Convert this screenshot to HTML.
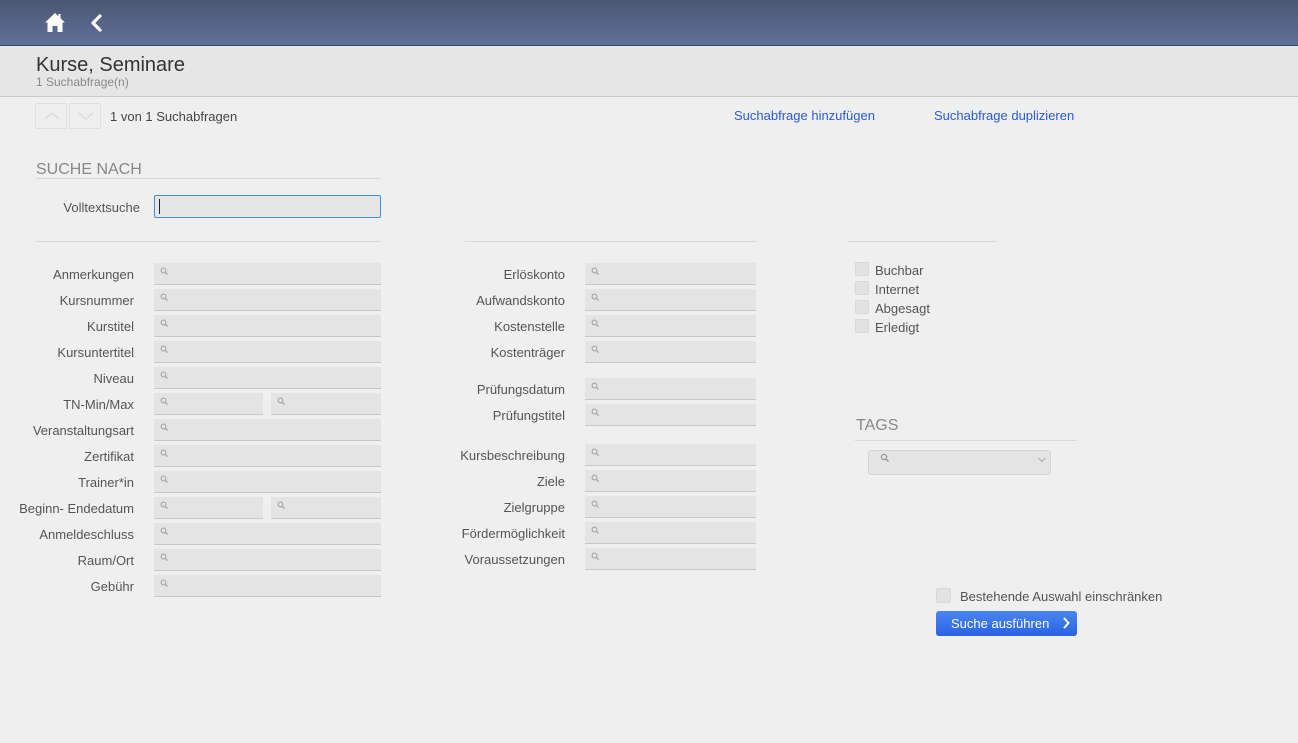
<!DOCTYPE html>
<html><head><meta charset="utf-8"><style>
*{box-sizing:border-box;margin:0;padding:0}
body{width:1298px;height:743px;background:#efefef;font-family:"Liberation Sans",Arial,sans-serif;position:relative;overflow:hidden;color:#444}
.a{position:absolute}
.top{left:0;top:0;width:1298px;height:46px;background:linear-gradient(#4b5672,#607199);border-bottom:1px solid #3c4660}
.band{left:0;top:46px;width:1298px;height:51px;background:#e6e6e6;border-bottom:1px solid #c9c9c9}
.lbl{font-size:13px;color:#555;text-align:right;line-height:16px;white-space:nowrap}
.in{height:22px;background:#e4e4e4;border-bottom:1px solid #c8c8c8}
.in svg{position:absolute;left:6px;top:4px}
.hr{height:1px;background:#d9d9d9}
.cb{width:14px;height:14px;background:#e2e2e2;border:1px solid #d8d8d8;border-radius:2px}
.cl{font-size:13px;color:#555;line-height:16px}
.lnk{font-size:13px;color:#2a5bd0;line-height:16px}
</style></head><body>
<div class="a top"></div>
<svg class="a" style="left:44px;top:12px" width="22" height="21" viewBox="0 0 22 21"><path d="M11 1 L1 10.5 L3.5 10.5 L3.5 20 L8.5 20 L8.5 14 L13.5 14 L13.5 20 L18.5 20 L18.5 10.5 L21 10.5 L16.5 6.2 L16.5 2 L14.5 2 L14.5 4.3 Z" fill="#fff"/></svg>
<svg class="a" style="left:89px;top:14px" width="14" height="18" viewBox="0 0 14 18"><path d="M11 2 L4 9 L11 16" stroke="#fff" stroke-width="3.2" fill="none" stroke-linecap="round" stroke-linejoin="round"/></svg>
<div class="a band"></div>
<div class="a" style="left:36px;top:53px;font-size:20px;color:#333;line-height:24px">Kurse, Seminare</div>
<div class="a" style="left:36px;top:75px;font-size:12px;color:#888;line-height:14px">1 Suchabfrage(n)</div>
<div class="a" style="left:35px;top:103px;width:32px;height:26px;border:1px solid #e0e0e0"></div>
<div class="a" style="left:69px;top:103px;width:32px;height:26px;border:1px solid #e0e0e0"></div>
<svg class="a" style="left:42px;top:110px" width="20" height="12"><path d="M3 9 L10 3 L17 9" stroke="#ddd" stroke-width="1.5" fill="none"/></svg>
<svg class="a" style="left:76px;top:110px" width="20" height="12"><path d="M3 3 L10 9 L17 3" stroke="#ddd" stroke-width="1.5" fill="none"/></svg>
<div class="a" style="left:110px;top:109px;font-size:13px;color:#444;line-height:16px">1 von 1 Suchabfragen</div>
<div class="a lnk" style="left:734px;top:108px">Suchabfrage hinzufügen</div>
<div class="a lnk" style="left:934px;top:108px">Suchabfrage duplizieren</div>
<div class="a" style="left:36px;top:160px;font-size:16px;color:#888;line-height:20px">SUCHE NACH</div>
<div class="a hr" style="left:36px;top:178px;width:345px"></div>
<div class="a lbl" style="left:0;width:140px;top:200px">Volltextsuche</div>
<div class="a" style="left:154px;top:195px;width:227px;height:23px;background:#e6e6e6;border:1px solid #3d8fd8;border-radius:2px"></div>
<div class="a" style="left:159px;top:199px;width:1px;height:15px;background:#222"></div>
<div class="a hr" style="left:36px;top:241px;width:345px"></div>
<div class="a hr" style="left:465px;top:241px;width:292px"></div>
<div class="a hr" style="left:848px;top:241px;width:149px"></div>
<div id="f"></div>
<div class="a cb" style="left:855px;top:262px"></div><div class="a cl" style="left:875px;top:263px">Buchbar</div>
<div class="a cb" style="left:855px;top:281px"></div><div class="a cl" style="left:875px;top:282px">Internet</div>
<div class="a cb" style="left:855px;top:300px"></div><div class="a cl" style="left:875px;top:301px">Abgesagt</div>
<div class="a cb" style="left:855px;top:319px"></div><div class="a cl" style="left:875px;top:320px">Erledigt</div>
<div class="a" style="left:856px;top:416px;font-size:16px;color:#888;line-height:20px">TAGS</div>
<div class="a hr" style="left:855px;top:440px;width:222px"></div>
<div class="a" style="left:868px;top:450px;width:183px;height:25px;background:#e4e4e4;border:1px solid #d4d4d4;border-radius:3px"></div>
<svg class="a" style="left:880px;top:453px" width="10" height="10"><circle cx="4" cy="4" r="2.6" stroke="#999" stroke-width="1.2" fill="none"/><path d="M6 6 L8.5 8.5" stroke="#999" stroke-width="1.4"/></svg>
<svg class="a" style="left:1037px;top:456px" width="10" height="8"><path d="M1.5 2 L5 5.5 L8.5 2" stroke="#aaa" stroke-width="1" fill="none"/></svg>
<div class="a cb" style="left:936px;top:588px;width:15px;height:15px"></div>
<div class="a cl" style="left:960px;top:589px">Bestehende Auswahl einschränken</div>
<div class="a" style="left:936px;top:611px;width:141px;height:25px;background:linear-gradient(#4a86f2,#2a62e4);border-radius:3px"></div>
<div class="a" style="left:951px;top:616px;font-size:13px;color:#fff;line-height:16px">Suche ausführen</div>
<svg class="a" style="left:1061px;top:616px" width="10" height="14"><path d="M3 2 L7.5 7 L3 12" stroke="#fff" stroke-width="2" fill="none"/></svg>
<script>
var ic='<svg width="9" height="9"><circle cx="3.5" cy="3.5" r="2.4" stroke="#a5a5a5" stroke-width="1.1" fill="none"/><path d="M5.2 5.2 L7.6 7.6" stroke="#a5a5a5" stroke-width="1.3"/></svg>';
var h='';
function row(lab,lx,lw,y,ix,iw,split){
 h+='<div class="a lbl" style="left:'+lx+'px;width:'+lw+'px;top:'+(y+4)+'px">'+lab+'</div>';
 if(split){
  h+='<div class="a in" style="left:'+ix+'px;top:'+y+'px;width:109px">'+ic+'</div>';
  h+='<div class="a in" style="left:'+(ix+117)+'px;top:'+y+'px;width:110px">'+ic+'</div>';
 } else h+='<div class="a in" style="left:'+ix+'px;top:'+y+'px;width:'+iw+'px">'+ic+'</div>';
}
var L=["Anmerkungen","Kursnummer","Kurstitel","Kursuntertitel","Niveau","TN-Min/Max","Veranstaltungsart","Zertifikat","Trainer*in","Beginn- Endedatum","Anmeldeschluss","Raum/Ort","Gebühr"];
L.forEach(function(t,i){row(t,0,134,263+26*i,154,227,i==5||i==9);});
var M=[["Erlöskonto",263],["Aufwandskonto",289],["Kostenstelle",315],["Kostenträger",341],["Prüfungsdatum",378],["Prüfungstitel",404],["Kursbeschreibung",444],["Ziele",470],["Zielgruppe",496],["Fördermöglichkeit",522],["Voraussetzungen",548]];
M.forEach(function(m){row(m[0],400,165,m[1],585,171,false);});
document.getElementById('f').outerHTML=h;
</script>
</body></html>
